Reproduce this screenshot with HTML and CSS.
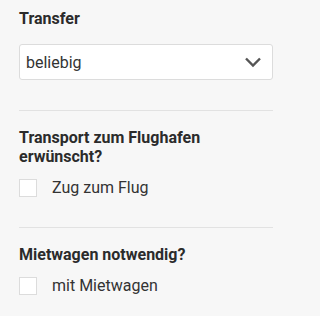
FILE: index.html
```html
<!DOCTYPE html>
<html lang="de">
<head>
<meta charset="utf-8">
<link rel="stylesheet" href="styles.css">
</head>
<body>
<div class="panel">
  <section class="group">
    <h3 class="group-title">Transfer</h3>
    <div class="select">
      <span class="select-value">beliebig</span>
      <svg class="chevron" width="18" height="12" viewBox="0 0 18 12"><path d="M2 2.5 L9 9.5 L16 2.5" fill="none" stroke="#555" stroke-width="2.4"/></svg>
    </div>
  </section>
  <section class="group">
    <h3 class="group-title">Transport zum Flughafen erwünscht?</h3>
    <label class="check"><span class="box"></span><span class="check-label">Zug zum Flug</span></label>
  </section>
  <section class="group">
    <h3 class="group-title">Mietwagen notwendig?</h3>
    <label class="check"><span class="box"></span><span class="check-label">mit Mietwagen</span></label>
  </section>
</div>
</body>
</html>
```
FILE: styles.css
```css
html, body {
  margin: 0;
  padding: 0;
  background: #f7f7f7;
}
body {
  font-family: Roboto, "Liberation Sans", sans-serif;
  color: #333;
}
.panel {
  width: 254px;
  padding: 9px 18px 0 19px;
}
.group {
  border-bottom: 1px solid #e2e2e2;
  padding-bottom: 30px;
}
.group + .group {
  padding-top: 17px;
}
.group:last-child {
  border-bottom: none;
}
.group-title {
  margin: 0;
  font-size: 16px;
  line-height: 19px;
  font-weight: 700;
  color: #2b2b2b;
}
.select {
  margin-top: 16px;
  height: 34px;
  border: 1px solid #dcdcdc;
  border-radius: 3px;
  background: #fff;
  display: flex;
  align-items: center;
  justify-content: space-between;
  padding: 0 10px 0 6px;
}
.select-value {
  font-size: 16px;
  color: #333;
}
.chevron {
  display: block;
}
.check {
  margin-top: 12px;
  display: flex;
  align-items: center;
}
.box {
  width: 16px;
  height: 16px;
  border: 1px solid #dcdcdc;
  background: #fff;
}
.check-label {
  margin-left: 15px;
  font-size: 16px;
  color: #333;
}
```
